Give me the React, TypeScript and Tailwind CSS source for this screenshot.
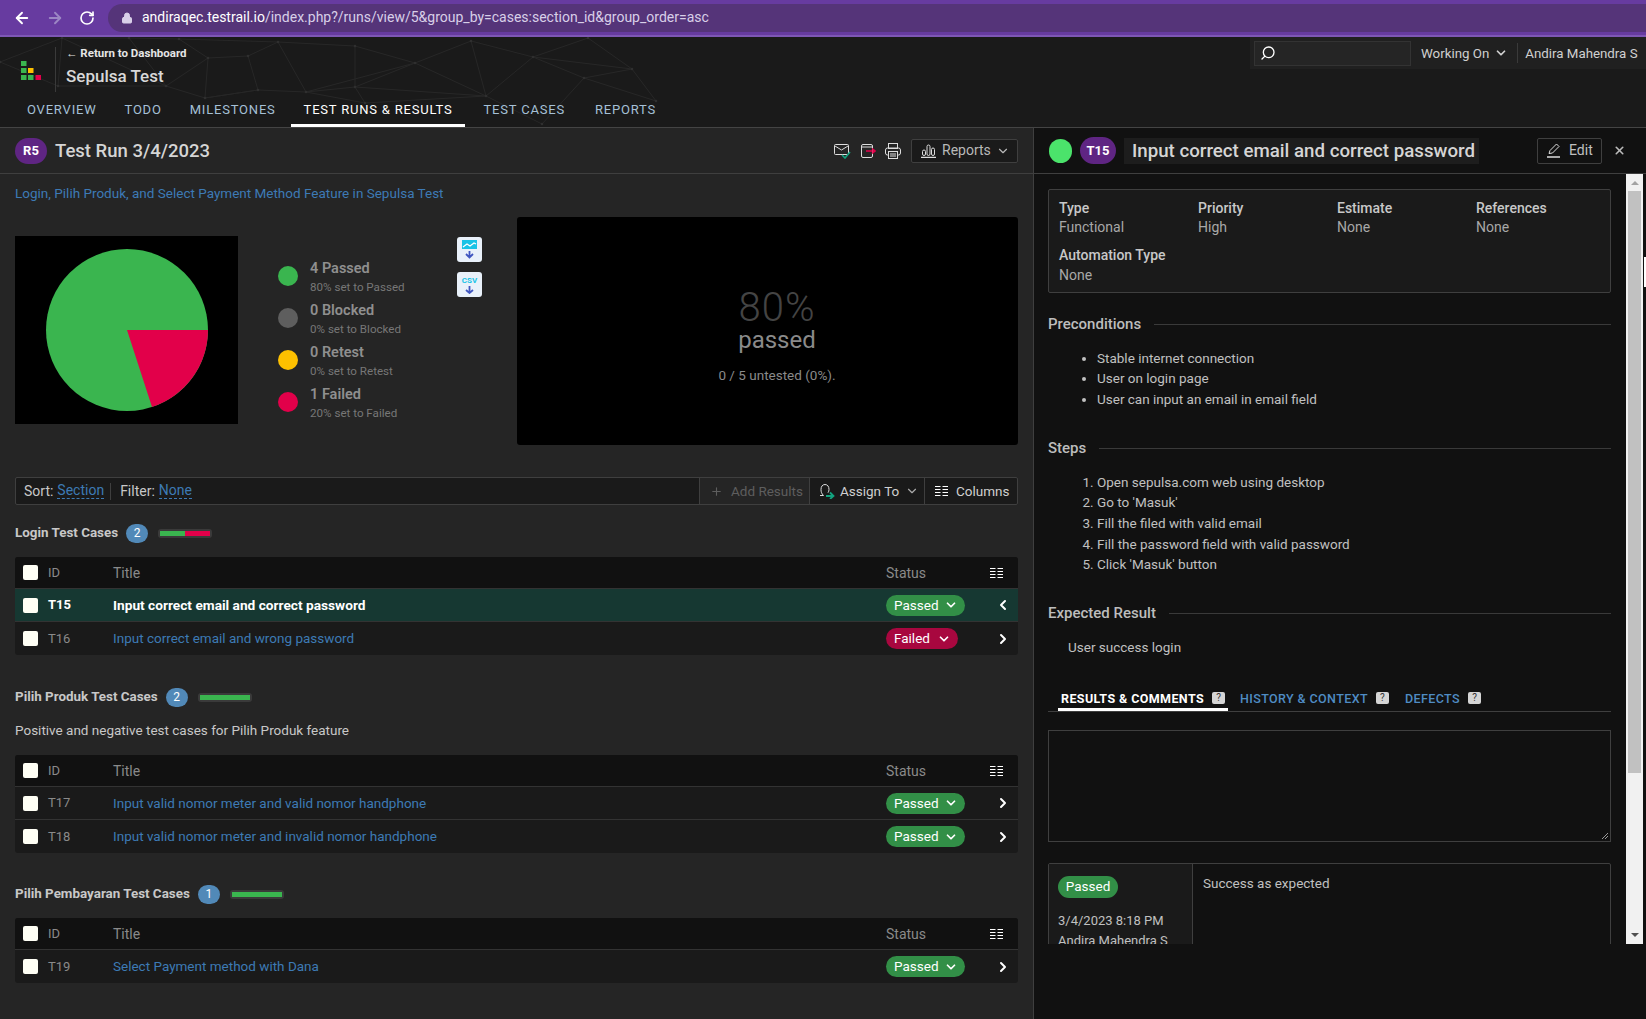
import { ChevronDown, ChevronLeft, ChevronRight, Lock, ArrowLeft, ArrowRight, RotateCw, Search, Plus, X } from "lucide-react";

const font = "font-['Roboto','Liberation_Sans',sans-serif]";

function ColumnsIcon({ className }: { className?: string }) {
  return (
    <svg width="13" height="12" viewBox="0 0 13 12" className={className} fill="none" stroke="currentColor" strokeWidth="1">
      <path d="M0 1.5h5.5M0 4.5h5.5M0 7.5h5.5M0 10.5h5.5M7.5 1.5H13M7.5 4.5H13M7.5 7.5H13M7.5 10.5H13" />
    </svg>
  );
}

function HeaderMesh() {
  const nodes = [[62, 37], [129, 37], [179, 38], [278, 41], [355, 45], [471, 40], [588, 37], [533, 56], [632, 68], [584, 77], [415, 62], [248, 55], [208, 57], [306, 91], [355, 86], [258, 89], [205, 97], [166, 85], [486, 95], [656, 100], [542, 123], [365, 102], [0, 61], [58, 85]];
  const edges = [[22, 0], [0, 1], [1, 2], [2, 12], [12, 11], [11, 3], [3, 4], [3, 13], [11, 15], [15, 13], [13, 14], [14, 4], [4, 10], [10, 14], [10, 5], [5, 18], [18, 10], [18, 7], [7, 5], [7, 6], [7, 9], [9, 8], [8, 7], [8, 19], [9, 19], [9, 20], [18, 20], [13, 21], [21, 14], [21, 18], [12, 16], [16, 17], [17, 12], [17, 23], [23, 0], [16, 15], [1, 17], [0, 17], [2, 3], [14, 18], [15, 16], [6, 8], [10, 13], [22, 23]];
  return (
    <svg className="absolute left-0 top-0 pointer-events-none" width="680" height="91" viewBox="0 36 680 91" fill="none">
      {edges.map(([a, b], i) => (
        <line key={i} x1={nodes[a][0]} y1={nodes[a][1]} x2={nodes[b][0]} y2={nodes[b][1]} stroke="#272727" strokeWidth="1" />
      ))}
      {nodes.map(([x, y], i) => (
        <circle key={i} cx={x} cy={y} r="1.3" fill="#2f2f2f" />
      ))}
    </svg>
  );
}

function Pill({ label, color }: { label: string; color: "green" | "red" }) {
  return (
    <span className={`inline-flex items-center h-[21px] pl-2 pr-[7px] rounded-full text-[13.5px] text-white ${color === "green" ? "bg-[#328f47] w-[79px]" : "bg-[#a8073f] w-[72px]"}`}>
      <span>{label}</span>
      <ChevronDown size={14} strokeWidth={3} className="ml-auto" />
    </span>
  );
}

type Row = { id: string; title: string; status: "Passed" | "Failed"; active?: boolean };

function CaseTable({ rows }: { rows: Row[] }) {
  return (
    <div className="rounded-[3px] overflow-hidden bg-[#1a1a1a] text-[13.5px]">
      <div className="flex items-center h-[32px] bg-[#111111] border-b border-[#333] text-[#8a8a8a]">
        <span className="w-[15px] h-[15px] ml-[8px] bg-[#fffff5] rounded-[2px]" />
        <span className="ml-[10px] w-[65px] pt-px text-[13px]">ID</span>
        <span className="flex-1 pt-px text-[14px]">Title</span>
        <span className="w-[104px] pt-px text-[14px]">Status</span>
        <ColumnsIcon className="text-white mr-[15px]" />
      </div>
      {rows.map((r, i) => (
        <div key={r.id} className={`flex items-center h-[33px] ${i < rows.length - 1 ? "border-b border-[#333]" : ""} ${r.active ? "bg-[#163832]" : ""}`}>
          <span className="w-[15px] h-[15px] ml-[8px] bg-[#fffff5] rounded-[2px]" />
          <span className={`ml-[10px] w-[65px] text-[13px] ${r.active ? "text-white font-bold" : "text-[#8a8a8a]"}`}>{r.id}</span>
          <span className={`flex-1 ${r.active ? "text-white font-bold text-[13.7px]" : "text-[#3d7ab5]"}`}>{r.title}</span>
          <span className="w-[109px]">
            <Pill label={r.status} color={r.status === "Passed" ? "green" : "red"} />
          </span>
          {r.active ? <ChevronLeft size={16} strokeWidth={3} className="text-white mr-[7px]" /> : <ChevronRight size={16} strokeWidth={3} className="text-white mr-[7px]" />}
        </div>
      ))}
    </div>
  );
}

function SectionTitle({ title, count, red }: { title: string; count: number; red?: boolean }) {
  return (
    <div className="flex items-center h-[20px]">
      <span className="text-[13.4px] font-bold text-[#c8c8c8]">{title}</span>
      <span className="ml-[8px] w-[22px] h-[19px] rounded-full bg-[#5189b8] text-white text-[12px] flex items-center justify-center">{count}</span>
      <span className="ml-[10px] w-[54px] h-[9px] p-[2px] rounded-[3px] bg-[#3a3a3a] flex">
        <span className="flex-1 bg-[#3ab54f]" />
        {red && <span className="flex-1 bg-[#e2004a]" />}
      </span>
    </div>
  );
}

function Legend({ color, title, sub }: { color: string; title: string; sub: string }) {
  return (
    <div className="flex items-center h-[42px]">
      <span className={`w-[20px] h-[20px] mb-[2px] rounded-full ${color}`} />
      <div className="ml-[12px]">
        <div className="text-[14.5px] leading-[20px] font-semibold text-[#8f8f8f]">{title}</div>
        <div className="text-[11.6px] leading-[16px] text-[#777]">{sub}</div>
      </div>
    </div>
  );
}

function Heading({ children }: { children: string }) {
  return (
    <div className="flex items-center gap-[13px]">
      <span className="text-[15px] font-medium text-[#bdbdbd]">{children}</span>
      <span className="flex-1 h-px bg-[#3a3a3a]" />
    </div>
  );
}

function Help() {
  return <span className="mt-[2px] w-[13px] h-[12px] rounded-[2px] bg-[#d5d5d5] text-[#333] text-[10px] leading-[12px] text-center font-normal tracking-normal">?</span>;
}

const tabs = ["OVERVIEW", "TODO", "MILESTONES"];

export default function App() {
  return (
    <div className={`${font} relative w-[1646px] h-[1019px] overflow-hidden flex flex-col bg-[#252525] text-[#c8c8c8]`}>
      {/* Browser bar */}
      <div className="h-[37px] shrink-0 bg-[#673ba0] border-b-2 border-[#7e57b5] flex items-center">
        <ArrowLeft size={18} strokeWidth={2.5} className="ml-[13px] text-white" />
        <ArrowRight size={18} strokeWidth={2.5} className="ml-[15px] text-[#9c86c4]" />
        <RotateCw size={16} strokeWidth={2.5} className="ml-[15px] text-white" />
        <div className="ml-[13px] flex-1 h-[28px] rounded-l-full bg-[#553479] flex items-center text-[14px]">
          <Lock size={12} className="ml-[13px] text-[#d8cfe8]" fill="currentColor" />
          <span className="ml-[9px] text-white">andiraqec.testrail.io</span>
          <span className="text-[#d8cfe8]">/index.php?/runs/view/5&amp;group_by=cases:section_id&amp;group_order=asc</span>
        </div>
      </div>

      {/* Project header */}
      <div className="relative h-[91px] shrink-0 bg-[#1a1a1a] border-b border-[#444] flex flex-col overflow-hidden">
        <HeaderMesh />
        <div className="relative flex flex-1">
          <div className="w-[55px] flex items-start justify-start">
            <svg width="21" height="19" viewBox="0 0 21 19" className="ml-[21px] mt-[24px]">
              <rect x="0" y="0" width="5.5" height="5" fill="#3ab54f" />
              <rect x="0" y="7" width="5.5" height="5" fill="#3ab54f" />
              <rect x="7" y="7" width="5.5" height="5" fill="#fdc000" />
              <rect x="0" y="14" width="5.5" height="5" fill="#3ab54f" />
              <rect x="7" y="14" width="5.5" height="5" fill="#3ab54f" />
              <rect x="14.5" y="14" width="5.5" height="5" fill="#e2004a" />
            </svg>
          </div>
          <div className="w-px h-[45px] mt-[10px] bg-[#3a3a3a]" />
          <div className="ml-[10px] pt-[8px]">
            <div className="text-[11.5px] leading-[16px] font-bold text-[#e5e5e5]">← Return to Dashboard</div>
            <div className="mt-[3px] text-[17px] leading-[24px] font-medium text-[#d8d8d8]">Sepulsa Test</div>
          </div>
          <div className="ml-auto h-[32px] w-[396px] pl-[4px] bg-[#202020] flex items-center text-[13.3px] text-[#d0d0d0]">
            <div className="w-[157px] h-[25px] bg-[#252525] border border-[#333] flex items-center pl-[5px]">
              <Search size={16} strokeWidth={2} className="text-white -scale-x-100" />
            </div>
            <span className="ml-[10px] pt-px">Working On</span>
            <ChevronDown size={14} strokeWidth={3} className="ml-[5px]" />
            <span className="ml-[9px] mr-[7px] w-px h-[20px] bg-[#3a3a3a]" />
            <span className="pt-px">Andira Mahendra S</span>
          </div>
        </div>
        <nav className="relative flex h-[33px] pl-[13px] text-[13px] tracking-[0.8px] text-[#a5c0d6]">
          {tabs.map((t) => (
            <span key={t} className="px-[14px] pt-[6px]">{t}</span>
          ))}
          <span className="ml-[1.5px] mr-[3.5px] px-[12.5px] pt-[6px] text-white border-b-[3px] border-white">TEST RUNS &amp; RESULTS</span>
          <span className="px-[15px] pt-[6px]">TEST CASES</span>
          <span className="px-[15px] pt-[6px]">REPORTS</span>
        </nav>
      </div>

      <div className="flex flex-1 min-h-0">
        {/* Left panel */}
        <main className="w-[1034px] shrink-0 border-r border-[#3f3f3f]">
          <div className="h-[46px] px-[15px] flex items-center border-b border-[#3f3f3f]">
            <span className="w-[32px] h-[26px] rounded-full bg-[#5f2583] text-white font-bold text-[13px] flex items-center justify-center">R5</span>
            <span className="ml-[8px] pt-[2px] text-[18.5px] font-medium text-[#d5d5d5]">Test Run 3/4/2023</span>
            <div className="ml-auto flex items-center gap-[9px]">
              <svg width="17" height="16" viewBox="0 0 17 16" fill="none" stroke="#ddd"><rect x="0.5" y="1.5" width="14" height="10" rx="1" /><path d="M1 3l6.5 4L14 3" /><path d="M8 12l3 3 5-6" stroke="#12a37f" strokeWidth="1.6" /></svg>
              <svg width="16" height="16" viewBox="0 0 16 16" fill="none" stroke="#ddd"><rect x="1.5" y="1.5" width="11" height="13" rx="1.5" /><path d="M1.5 4h11" /><path d="M6 8h9M12 5.5L15 8l-3 2.5" stroke="#e2004a" strokeWidth="1.6" /></svg>
              <svg width="16" height="16" viewBox="0 0 16 16" fill="none" stroke="#ddd"><rect x="3.5" y="0.5" width="9" height="5" /><rect x="0.5" y="5" width="15" height="7" rx="2" /><rect x="3.5" y="8.5" width="9" height="7" fill="#252525" /><path d="M5 11h6M5 13h6" /></svg>
              <div className="ml-[1px] w-[107px] h-[24px] bg-[#1a1a1a] border border-[#3f3f3f] rounded-[2px] flex items-center pl-[9px] text-[14px] text-[#b8b8b8]">
                <svg width="15" height="14" viewBox="0 0 15 14" fill="none" stroke="#ddd"><path d="M0 13.5h15" strokeWidth="1.5" /><rect x="1.5" y="6" width="3" height="5.5" rx="1.5" /><rect x="6" y="1" width="3" height="10.5" rx="1.5" /><rect x="10.5" y="4" width="3" height="7.5" rx="1.5" /></svg>
                <span className="ml-[6px]">Reports</span>
                <ChevronDown size={14} strokeWidth={2} className="ml-auto mr-[7px]" />
              </div>
            </div>
          </div>

          <div className="px-[15px]">
            <p className="mt-[9px] h-[20px] text-[13.5px] leading-[20px] text-[#3d7ab5]">Login, Pilih Produk, and Select Payment Method Feature in Sepulsa Test</p>

            <div className="mt-[14px] h-[228px] flex">
              <div className="mt-[19px] w-[223px] h-[188px] bg-black flex items-center justify-center">
                <svg width="162" height="162" viewBox="-81 -81 162 162">
                  <circle r="81" fill="#3ab54f" />
                  <path d="M0 0L81 0A81 81 0 0 1 25 77Z" fill="#e2004a" />
                </svg>
              </div>
              <div className="ml-[40px] mt-[39px] w-[179px]">
                <Legend color="bg-[#3ab54f]" title="4 Passed" sub="80% set to Passed" />
                <Legend color="bg-[#5e5e5e]" title="0 Blocked" sub="0% set to Blocked" />
                <Legend color="bg-[#fdc000]" title="0 Retest" sub="0% set to Retest" />
                <Legend color="bg-[#e2004a]" title="1 Failed" sub="20% set to Failed" />
              </div>
              <div className="mt-[20px] flex flex-col gap-[10px]">
                <div className="w-[25px] h-[25px] rounded-[3px] bg-[#e9f1fa] flex items-center justify-center">
                  <svg width="15" height="19" viewBox="0 0 15 19"><path d="M0 0h15v9H0z" fill="#19c3e6" /><path d="M1 7l4-3 3 2 4-3 2 1" stroke="#fff" strokeWidth="1.2" fill="none" /><path d="M7.5 11v6M4 14l3.5 3.5L11 14" stroke="#4056c0" strokeWidth="1.8" fill="none" /></svg>
                </div>
                <div className="w-[25px] h-[25px] rounded-[3px] bg-[#e9f1fa] flex flex-col items-center justify-center">
                  <span className="text-[8px] leading-[9px] font-bold text-[#19c3e6]">CSV</span>
                  <svg width="11" height="9" viewBox="0 0 11 9"><path d="M5.5 1v7M2 5l3.5 3L9 5" stroke="#4056c0" strokeWidth="1.8" fill="none" /></svg>
                </div>
              </div>
              <div className="ml-[35px] w-[501px] h-[228px] rounded-[3px] bg-black flex flex-col items-center pt-[74px] pl-[19px]">
                <span className="text-[40px] leading-[34px] font-light text-[#444] tracking-[1px]">80%</span>
                <span className="text-[24px] leading-[30px] text-[#8a8a8a]">passed</span>
                <span className="mt-[10px] text-[13.5px] text-[#8a8a8a]">0 / 5 untested (0%).</span>
              </div>
            </div>

            <div className="mt-[32px] h-[28px] flex items-center bg-[#1a1a1a] border border-[#3f3f3f] rounded-[2px] text-[13.5px]">
              <span className="ml-[8px] text-[14px] text-[#c8c8c8]">Sort:</span>
              <span className="ml-[4px] text-[14px] text-[#3d7ab5] border-b border-dashed border-[#3d7ab5] leading-[15px]">Section</span>
              <span className="ml-[6px] w-px h-[17px] bg-[#3f3f3f]" />
              <span className="ml-[9px] text-[14px] text-[#c8c8c8]">Filter:</span>
              <span className="ml-[4px] text-[14px] text-[#3d7ab5] border-b border-dashed border-[#3d7ab5] leading-[15px]">None</span>
              <div className="ml-auto h-full w-[111px] bg-[#252525] border-x border-[#3f3f3f] flex items-center pl-[10px] text-[#5e5e5e]">
                <Plus size={13} strokeWidth={2} />
                <span className="ml-[8px]">Add Results</span>
              </div>
              <div className="h-full w-[115px] border-r border-[#3f3f3f] flex items-center pl-[9px] text-[#d0d0d0]">
                <svg width="16" height="16" viewBox="0 0 16 16" fill="none"><path d="M1 12.5h3.5c-2-2-2.5-3.5-2.5-6C2 3.5 3.5 1.5 6 1.5s4 2 4 5c0 1.2-.3 2.2-1 3.2" stroke="#ddd" /><path d="M7 13h7M11 9.5l3.5 3.5L11 16" stroke="#12a37f" strokeWidth="1.8" /></svg>
                <span className="ml-[5px]">Assign To</span>
                <ChevronDown size={14} strokeWidth={2} className="ml-[6px] text-[#aaa]" />
              </div>
              <div className="h-full w-[92px] flex items-center pl-[10px] text-[#d0d0d0]">
                <ColumnsIcon className="text-white" />
                <span className="ml-[8px]">Columns</span>
              </div>
            </div>

            <div className="mt-[18px]"><SectionTitle title="Login Test Cases" count={2} red /></div>
            <div className="mt-[14px]">
              <CaseTable rows={[
                { id: "T15", title: "Input correct email and correct password", status: "Passed", active: true },
                { id: "T16", title: "Input correct email and wrong password", status: "Failed" },
              ]} />
            </div>

            <div className="mt-[32px]"><SectionTitle title="Pilih Produk Test Cases" count={2} /></div>
            <p className="mt-[13px] h-[20px] text-[13.5px] leading-[20px] text-[#c8c8c8]">Positive and negative test cases for Pilih Produk feature</p>
            <div className="mt-[15px]">
              <CaseTable rows={[
                { id: "T17", title: "Input valid nomor meter and valid nomor handphone", status: "Passed" },
                { id: "T18", title: "Input valid nomor meter and invalid nomor handphone", status: "Passed" },
              ]} />
            </div>

            <div className="mt-[31px]"><SectionTitle title="Pilih Pembayaran Test Cases" count={1} /></div>
            <div className="mt-[14px]">
              <CaseTable rows={[{ id: "T19", title: "Select Payment method with Dana", status: "Passed" }]} />
            </div>
          </div>
        </main>

        {/* Right panel */}
        <aside className="flex-1 min-w-0 bg-[#111111] flex flex-col">
          <div className="h-[46px] shrink-0 flex items-center pl-[15px] border-b border-[#3f3f3f]">
            <span className="w-[23px] h-[24px] rounded-full bg-[#4be36b]" />
            <span className="ml-[8px] w-[36px] h-[27px] rounded-full bg-[#5f2583] text-white font-bold text-[13px] flex items-center justify-center">T15</span>
            <span className="ml-[8px] h-[26px] pl-[8px] pr-[4px] bg-[#1d1d1d] text-[18.7px] leading-[27px] font-medium text-[#d5d5d5]">Input correct email and correct password</span>
            <div className="ml-auto w-[65px] h-[26px] border border-[#3f3f3f] rounded-[2px] flex items-center pl-[9px] text-[14px] text-[#c0c0c0]">
              <svg width="14" height="15" viewBox="0 0 14 15" fill="none" stroke="#ddd"><path d="M2 10.5L3 7.5 9.5 1l2.5 2.5L5.5 10z" /><path d="M0 14h13" strokeWidth="1.5" /></svg>
              <span className="ml-[8px]">Edit</span>
            </div>
            <X size={13} strokeWidth={3} className="ml-[11px] mr-[20px] text-[#bbb]" />
          </div>

          <div className="h-[770px] flex overflow-hidden">
            <div className="flex-1 min-w-0 pl-[14px] pr-[15px] pt-[15px]">
              <div className="h-[104px] bg-[#1a1a1a] border border-[#3f3f3f] rounded-[2px] px-[10px] pt-[9px] text-[14px] leading-[19px]">
                <div className="grid grid-cols-[139px_139px_139px_auto]">
                  {[["Type", "Functional"], ["Priority", "High"], ["Estimate", "None"], ["References", "None"]].map(([k, v]) => (
                    <div key={k}><div className="font-medium text-[#c8c8c8]">{k}</div><div className="text-[#a8a8a8]">{v}</div></div>
                  ))}
                </div>
                <div className="mt-[9px] font-medium text-[#c8c8c8]">Automation Type</div>
                <div className="mt-[1px] text-[#a8a8a8]">None</div>
              </div>

              <div className="mt-[20px]"><Heading>Preconditions</Heading></div>
              <ul className="mt-[12px] ml-[49px] list-disc text-[13.5px] leading-[20.5px] text-[#c0c0c0]">
                <li>Stable internet connection</li>
                <li>User on login page</li>
                <li>User can input an email in email field</li>
              </ul>

              <div className="mt-[28px]"><Heading>Steps</Heading></div>
              <ol className="mt-[12px] ml-[49px] list-decimal text-[13.5px] leading-[20.7px] text-[#c0c0c0]">
                <li>Open sepulsa.com web using desktop</li>
                <li>Go to 'Masuk'</li>
                <li>Fill the filed with valid email</li>
                <li>Fill the password field with valid password</li>
                <li>Click 'Masuk' button</li>
              </ol>

              <div className="mt-[27px]"><Heading>Expected Result</Heading></div>
              <p className="mt-[12px] ml-[20px] text-[13.5px] leading-[20px] text-[#c0c0c0]">User success login</p>

              <div className="mt-[31px] h-[24px] flex items-start border-b border-[#3f3f3f] text-[12.5px] font-medium tracking-[0.4px] text-[#4f8cc4]">
                <span className="ml-[10px] pl-[3px] pr-[3px] pt-[2px] h-[23px] border-b-[3px] border-white flex items-start gap-[8px] text-white font-bold">
                  RESULTS &amp; COMMENTS<Help />
                </span>
                <span className="ml-[12px] pt-[2px] flex items-start gap-[8px]">HISTORY &amp; CONTEXT<Help /></span>
                <span className="ml-[16px] pt-[2px] flex items-start gap-[8px]">DEFECTS<Help /></span>
              </div>

              <div className="relative mt-[18px] h-[112px] border border-[#3f3f3f]">
                <svg className="absolute right-[1px] bottom-[1px]" width="8" height="8" viewBox="0 0 8 8" stroke="#999"><path d="M1 7L7 1M4 7L7 4" /></svg>
              </div>

              <div className="mt-[21px] h-[200px] flex border border-[#3f3f3f] rounded-[2px]">
                <div className="w-[144px] shrink-0 bg-[#1a1a1a] border-r border-[#3f3f3f] pl-[9px] pt-[12px] text-[13px]">
                  <span className="inline-flex items-center justify-center w-[60px] h-[22px] rounded-full bg-[#328f47] text-[13.5px] text-white">Passed</span>
                  <div className="mt-[13px] leading-[20px] text-[#c0c0c0]">3/4/2023 8:18 PM</div>
                  <div className="leading-[20px] text-[#c0c0c0] whitespace-nowrap">Andira Mahendra S</div>
                </div>
                <div className="pl-[10px] pt-[9px] text-[13.5px] text-[#c0c0c0]">Success as expected</div>
              </div>
            </div>

            {/* Scrollbar */}
            <div className="w-[17px] mr-[3px] bg-[#f1f1f1] flex flex-col items-center">
              <span className="mt-[7px] w-0 h-0 border-x-[4px] border-x-transparent border-b-[4px] border-b-[#a3a3a3]" />
              <span className="mt-[6px] w-[13px] h-[582px] bg-[#c1c1c1]" />
              <span className="mt-auto mb-[7px] w-0 h-0 border-x-[4px] border-x-transparent border-t-[4px] border-t-[#505050]" />
            </div>
          </div>
        </aside>
      </div>

      {/* sliver of the outer page scrollbar */}
      <div className="absolute right-0 top-[257px] w-[2px] h-[30px] bg-white" />
    </div>
  );
}
